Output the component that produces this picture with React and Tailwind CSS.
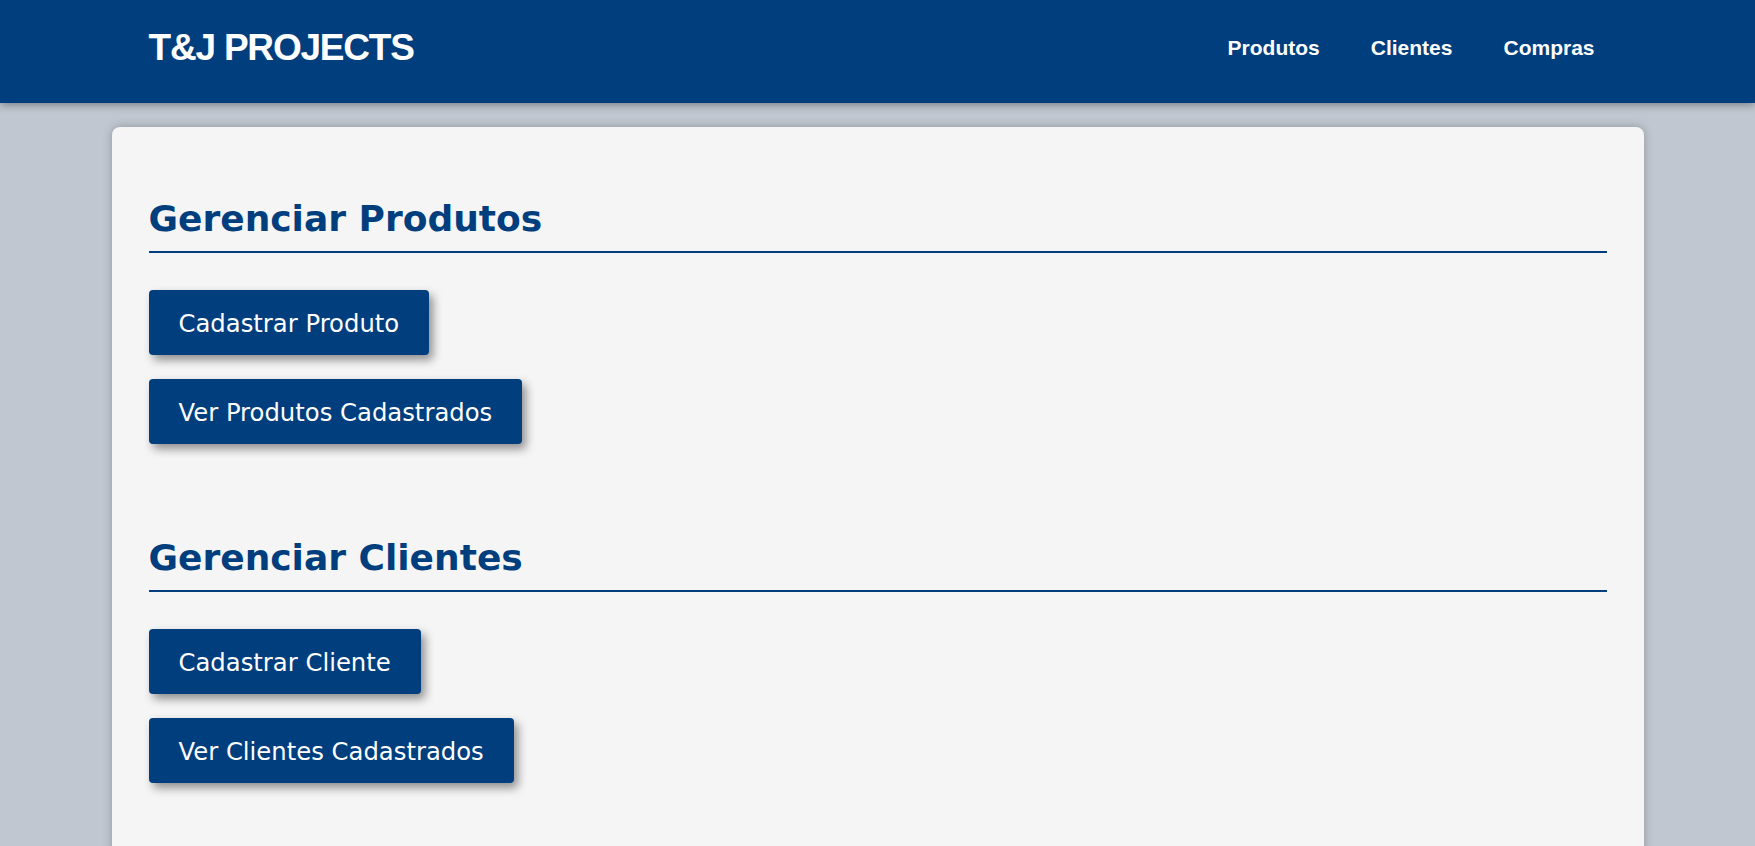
const navLinks = ['Produtos', 'Clientes', 'Compras']

const sections = [
  { title: 'Gerenciar Produtos', actions: ['Cadastrar Produto', 'Ver Produtos Cadastrados'] },
  { title: 'Gerenciar Clientes', actions: ['Cadastrar Cliente', 'Ver Clientes Cadastrados'] },
]

function Header() {
  return (
    <header className="relative z-10 h-[103px] bg-[#003e7e] shadow-[0_2px_8px_rgba(0,0,0,0.35)]">
      <div className="mx-auto flex h-full w-[1532px] items-start justify-between px-[37px]">
        <h1 className="pt-[29px] font-['Liberation_Sans',Arial,sans-serif] text-[37px] font-bold leading-none tracking-[-1.2px] text-white">
          T&amp;J PROJECTS
        </h1>
        <nav className="flex items-center gap-[27px] pt-[37px]">
          {navLinks.map((link) => (
            <a
              key={link}
              href="#"
              className="px-[12px] font-['Liberation_Sans',Arial,sans-serif] text-[21px] font-bold leading-none text-white"
            >
              {link}
            </a>
          ))}
        </nav>
      </div>
    </header>
  )
}

function Section({ title, actions }) {
  return (
    <section className="mb-[92px]">
      <h2 className="border-b-2 border-[#003e7e] pb-[11px] font-['DejaVu_Sans',Verdana,sans-serif] text-[36px] font-bold leading-[43px] text-[#003e7e]">
        {title}
      </h2>
      <div className="mt-[37px] flex flex-col items-start gap-[24px]">
        {actions.map((action) => (
          <button
            key={action}
            type="button"
            className="rounded-[4px] bg-[#003e7e] px-[30px] pb-[14px] pt-[16px] font-['DejaVu_Sans',Verdana,sans-serif] text-[24.3px] leading-[35px] text-white shadow-[4px_5px_10px_rgba(0,0,0,0.42)]"
          >
            {action}
          </button>
        ))}
      </div>
    </section>
  )
}

export default function App() {
  return (
    <div className="min-h-screen bg-[#c0c7d0]">
      <Header />
      <main className="pt-[24px]">
        <div className="mx-auto w-[1532px] rounded-[8px] bg-[#f5f5f5] px-[37px] pt-[70px] pb-[20px] shadow-[0_0_10px_rgba(0,0,0,0.25)]">
          {sections.map((s) => (
            <Section key={s.title} {...s} />
          ))}
        </div>
      </main>
    </div>
  )
}
